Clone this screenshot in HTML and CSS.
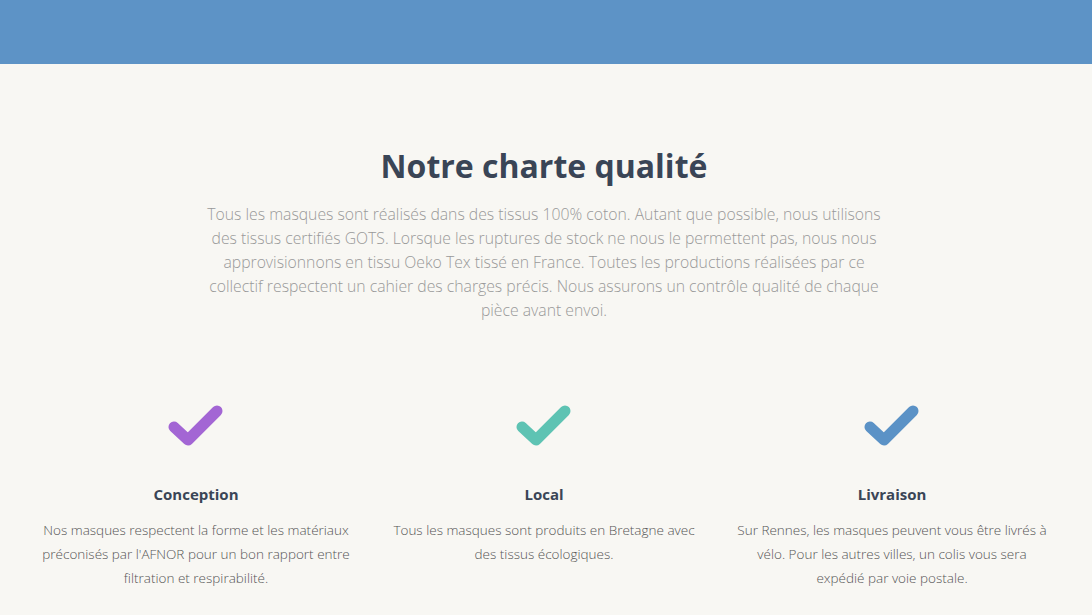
FILE: index.html
```html
<!DOCTYPE html>
<html lang="fr">
<head>
    <meta charset="UTF-8">
    <meta name="viewport" content="width=device-width, initial-scale=1.0">
    <title>Notre charte qualité</title>
    <link rel="stylesheet" href="styles.css">
</head>
<body>

    <header class="top-bar"></header>

    <section class="charte">
        <h2>Notre charte qualité</h2>
        <p class="intro">Tous les masques sont réalisés dans des tissus 100% coton. Autant que possible, nous utilisons des tissus certifiés GOTS. Lorsque les ruptures de stock ne nous le permettent pas, nous nous approvisionnons en tissu Oeko Tex tissé en France. Toutes les productions réalisées par ce collectif respectent un cahier des charges précis. Nous assurons un contrôle qualité de chaque pièce avant envoi.</p>

        <div class="features">
            <div class="feature">
                <svg class="check purple" viewBox="0 0 58 44" width="58" height="44">
                    <polyline points="7,23 21,36 50,7"/>
                </svg>
                <h3>Conception</h3>
                <p>Nos masques respectent la forme et les matériaux préconisés par l'AFNOR pour un bon rapport entre filtration et respirabilité.</p>
            </div>
            <div class="feature">
                <svg class="check teal" viewBox="0 0 58 44" width="58" height="44">
                    <polyline points="7,23 21,36 50,7"/>
                </svg>
                <h3>Local</h3>
                <p>Tous les masques sont produits en Bretagne avec des tissus écologiques.</p>
            </div>
            <div class="feature">
                <svg class="check blue" viewBox="0 0 58 44" width="58" height="44">
                    <polyline points="7,23 21,36 50,7"/>
                </svg>
                <h3>Livraison</h3>
                <p>Sur Rennes, les masques peuvent vous être livrés à vélo. Pour les autres villes, un colis vous sera expédié par voie postale.</p>
            </div>
        </div>
    </section>

</body>
</html>
```

FILE: styles.css
```css
body {
    font-family: "Open Sans", "Noto Sans", Arial, sans-serif;
    background-color: #f8f7f3;
    color: #3a4556;
    margin: 0;
    padding: 0;
}

.top-bar {
    height: 64px;
    background-color: #5d93c6;
}

.charte {
    text-align: center;
    padding: 82px 26px 0 22px;
}

h2 {
    font-size: 32px;
    font-weight: 700;
    color: #3a4556;
    margin: 0 0 16px;
    line-height: 40px;
}

.intro {
    max-width: 686px;
    margin: 0 auto;
    font-size: 15.75px;
    font-weight: 300;
    line-height: 24px;
    color: #999;
}

.features {
    display: grid;
    grid-template-columns: repeat(3, 1fr);
    margin-top: 82px;
}

.feature {
    padding: 0 16px;
}

.check {
    display: block;
    margin: 0 auto;
}

.check polyline {
    fill: none;
    stroke-width: 11;
    stroke-linecap: round;
    stroke-linejoin: round;
}

.check.purple polyline { stroke: #a366d4; }
.check.teal polyline { stroke: #5ec3b3; }
.check.blue polyline { stroke: #5b92c6; }

h3 {
    font-size: 15px;
    font-weight: 700;
    margin: 36px 0 14px;
    color: #3a4556;
}

.feature p {
    font-size: 13.5px;
    font-weight: 300;
    line-height: 24px;
    color: #555;
    margin: 0;
}
```
